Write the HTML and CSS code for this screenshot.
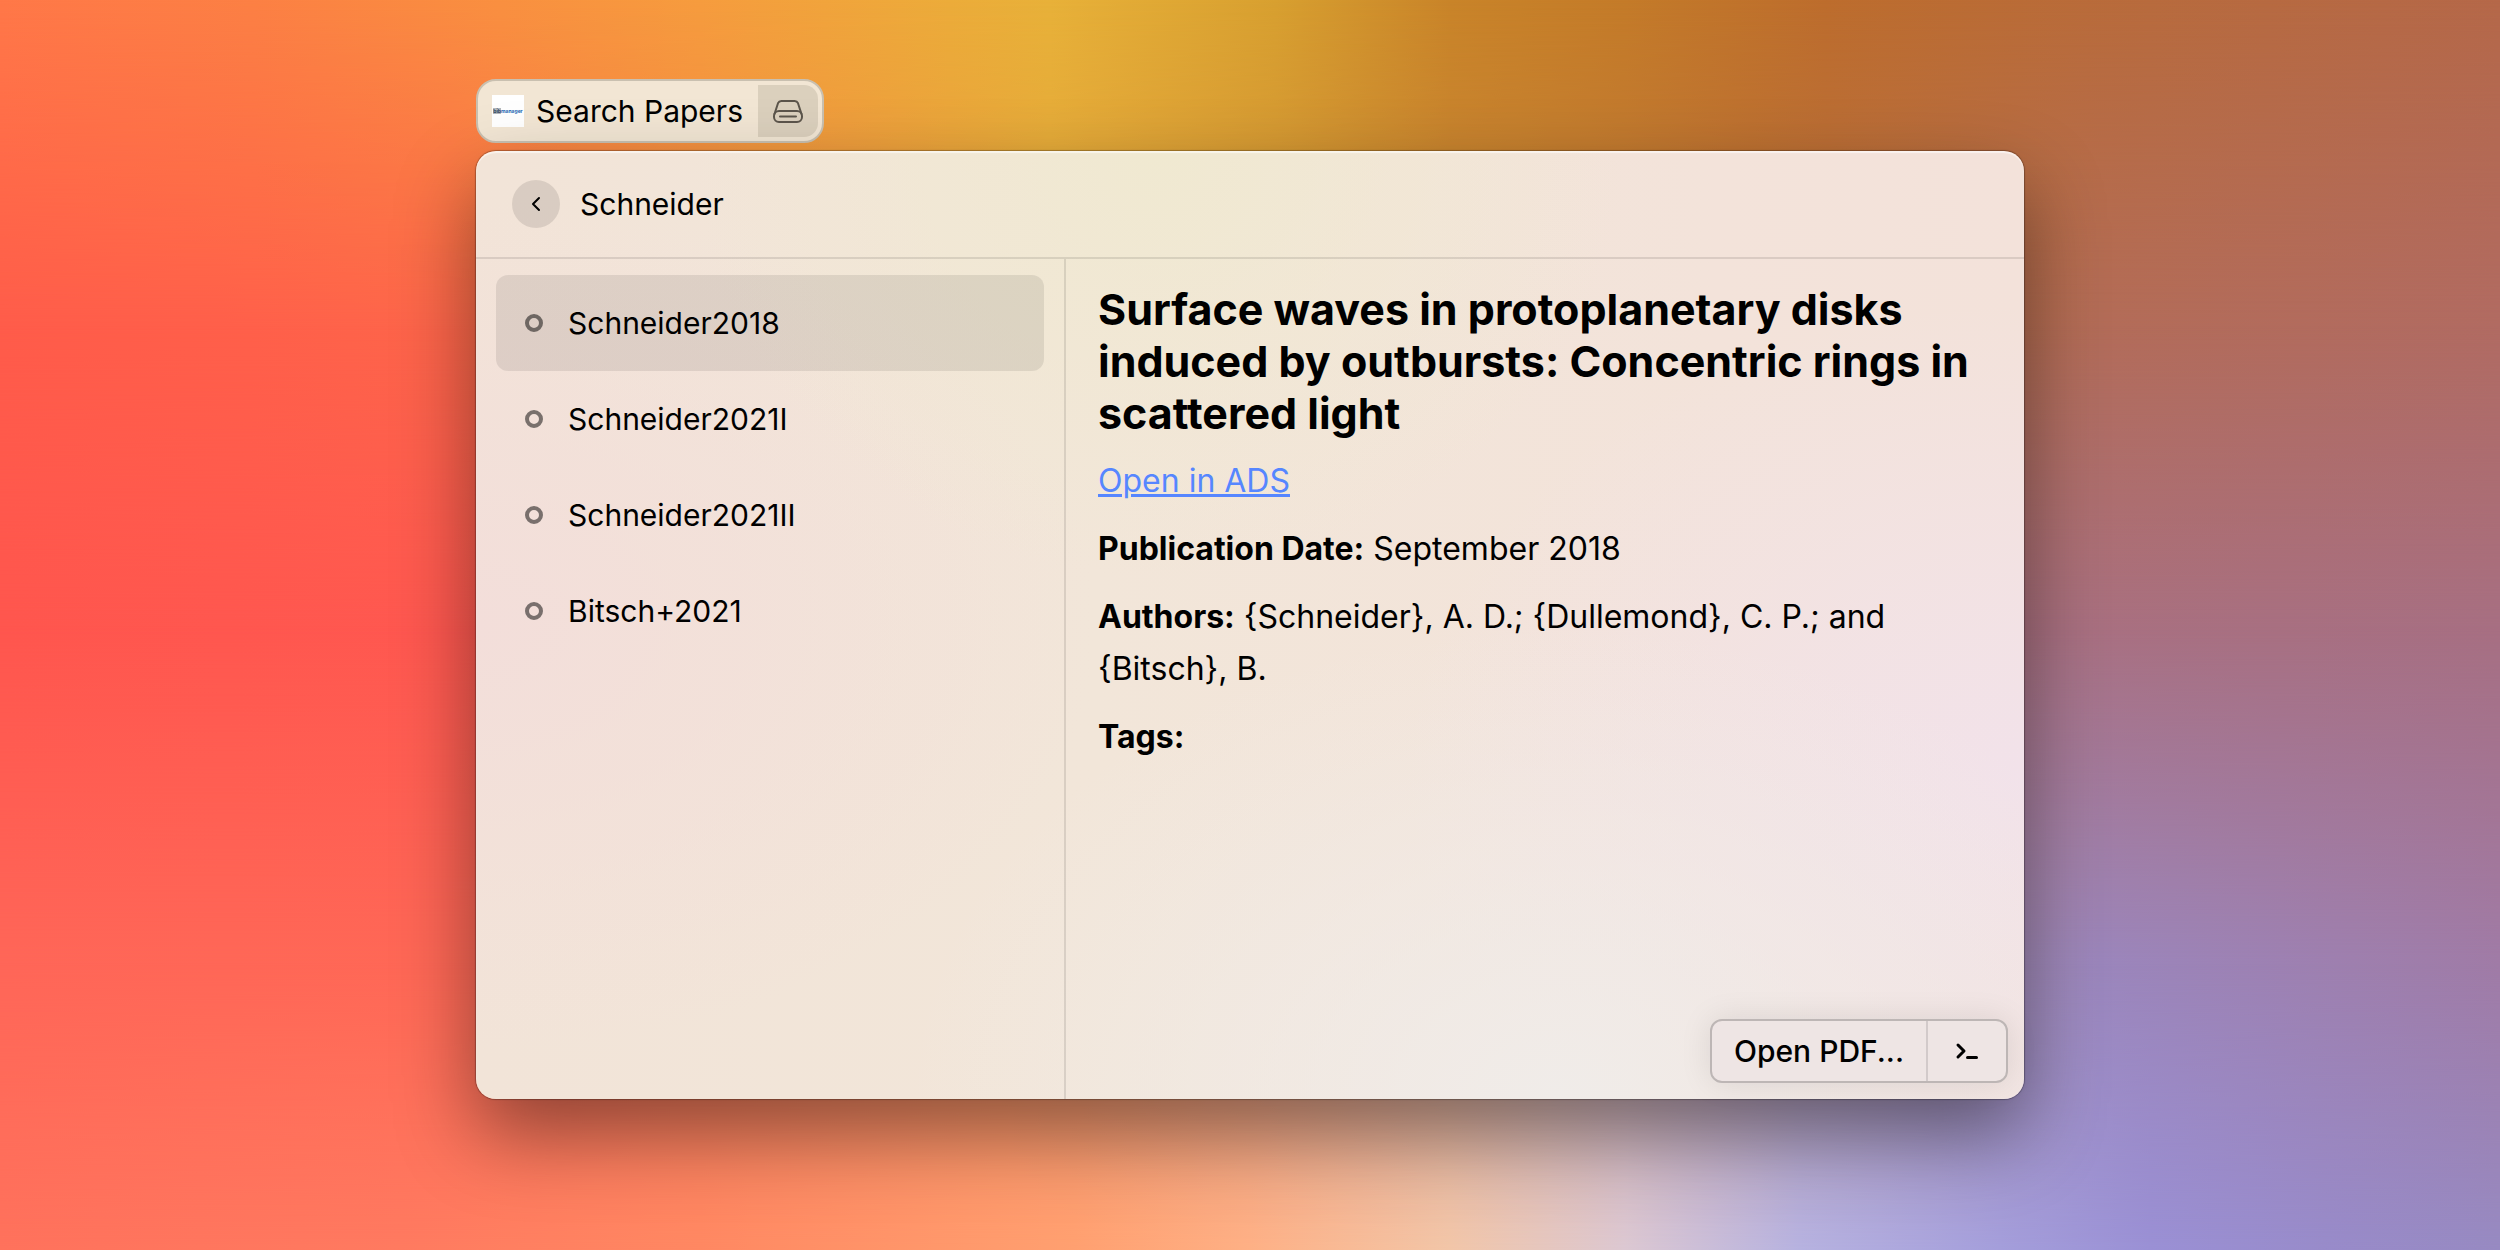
FILE: index.html
```html
<!DOCTYPE html>
<html lang="en">
<head>
<meta charset="utf-8">
<meta name="viewport" content="width=device-width, initial-scale=1">
<title>Search Papers</title>
<link rel="stylesheet" href="styles.css">
</head>
<body>
<div class="wallpaper" aria-hidden="true">
  <div class="band band-1"></div>
  <div class="band band-2"></div>
  <div class="band band-3"></div>
  <div class="band band-4"></div>
  <div class="band band-5"></div>
</div>
<main class="stage">
  <div class="badge">
    <span class="logo"><span class="logo-mark">bib</span>manager</span>
    <span class="badge-name">Search Papers</span>
    <span class="badge-source">
      <svg width="32" height="24" viewBox="0 0 32 24" fill="none" stroke="currentColor" stroke-width="2" stroke-linecap="round" stroke-linejoin="round">
        <rect x="2" y="12" width="28" height="11" rx="5"/>
        <path d="M2.500 15 6 4.200Q7 2 9.300 2h13.400Q25 2 26 4.200L29.500 15M8 17.500h16"/>
      </svg>
    </span>
  </div>

  <section class="window">
    <header class="search-bar">
      <button class="back" type="button" aria-label="Back">
        <svg width="12" height="16" viewBox="0 0 12 16" fill="none" stroke="currentColor" stroke-width="2" stroke-linecap="round" stroke-linejoin="round"><path d="M9 2 3 8l6 6"/></svg>
      </button>
      <input class="query" type="text" value="Schneider" aria-label="Search papers">
    </header>

    <div class="columns">
      <nav class="results" aria-label="Papers">
        <button class="result selected" type="button"><span class="ring"></span>Schneider2018</button>
        <button class="result" type="button"><span class="ring"></span>Schneider2021I</button>
        <button class="result" type="button"><span class="ring"></span>Schneider2021II</button>
        <button class="result" type="button"><span class="ring"></span>Bitsch+2021</button>
      </nav>

      <article class="detail">
        <h1>Surface waves in protoplanetary disks induced by outbursts: Concentric rings in scattered light</h1>
        <p><a href="#ads">Open in ADS</a></p>
        <p><strong>Publication Date:</strong> September 2018</p>
        <p><strong>Authors:</strong> {Schneider}, A. D.; {Dullemond}, C. P.; and {Bitsch}, B.</p>
        <p><strong>Tags:</strong></p>
        <div class="actions">
          <button class="action-main" type="button">Open PDF...</button>
          <button class="action-more" type="button" aria-label="More actions">
            <svg width="24" height="20" viewBox="0 0 24 20" fill="none" stroke="currentColor" stroke-width="3" stroke-linecap="round" stroke-linejoin="round"><path d="m3 4 6 6-6 6M12.500 16.500h9"/></svg>
          </button>
        </div>
      </article>
    </div>
  </section>
</main>
</body>
</html>
```

FILE: styles.css
```css
* {
  box-sizing: border-box;
}

body {
  margin: 0;
  color: #000;
  font-family: Inter, "Liberation Sans", sans-serif;
  font-size: 30px;
  line-height: 40px;
}

button,
input {
  margin: 0;
  padding: 0;
  border: 0;
  background: none;
  color: inherit;
  font: inherit;
}

svg {
  display: block;
}

/* Wallpaper: horizontal colour bands, each fading in over the one above it */
.wallpaper,
.band {
  position: absolute;
  inset: 0;
}

.wallpaper {
  z-index: -1;
  overflow: hidden;
}

.band-1 {
  background: linear-gradient(90deg, #ff7848, #fc8044 10%, #f99040 20%, #f69c3e 28%, #ecac3a 38%, #e8b139 42%, #d8a030 51%, #c98429 58%, #c47b29 65%, #bd6d2d 73%, #b86b3d 86%, #b56849);
}

.band-2 {
  background: linear-gradient(90deg, #ff5c4a, #ff604a 10%, #fd664a 18%, #f08a40 30%, #e4a53a 42%, #cc8a34 55%, #bb7038 70%, #b36c58 84%, #b16b62);
  mask-image: linear-gradient(transparent, #000 26%);
}

.band-3 {
  background: linear-gradient(90deg, #ff564e, #ff5850 18%, #f08054 40%, #c07864 60%, #a97080 82%, #a76f82);
  mask-image: linear-gradient(transparent 26%, #000 50%);
}

.band-4 {
  background: linear-gradient(90deg, #ff6658, #ff6856 18%, #ff9468 40%, #d0a8a8 62%, #9b86bc 84%, #a07ba6);
  mask-image: linear-gradient(transparent 50%, #000 77%);
}

.band-5 {
  background: linear-gradient(90deg, #ff725c, #ff7a60 16%, #ff8862 28%, #ffa070 43%, #feb085 50%, #f2c6a8 58%, #dcc8d2 65%, #b6b2e0 72%, #a49edb 80%, #9a90d5 86%, #988bca 93%, #978ac2);
  mask-image: linear-gradient(transparent 77%, #000);
}

.stage {
  max-width: 1548px;
  min-height: 100vh;
  margin: 0 auto;
  padding: 79px 0 72px;
  display: flex;
  flex-direction: column;
  align-items: flex-start;
  gap: 8px;
}

/* Command badge */
.badge {
  height: 64px;
  padding: 4px 4px 4px 14px;
  display: flex;
  align-items: center;
  gap: 12px;
  border: 2px solid #c9c0b0;
  border-radius: 20px;
  background: #f2e6d4;
}

.logo {
  width: 32px;
  height: 32px;
  display: flex;
  align-items: center;
  justify-content: center;
  background: #fff;
  color: #2466b4;
  font-size: 5px;
  font-weight: 700;
  line-height: 6px;
}

.logo-mark {
  background: #b4b8bc;
  color: #2c4460;
}

.badge-name {
  padding-right: 3px;
}

.badge-source {
  width: 60px;
  height: 52px;
  display: grid;
  place-items: center;
  border-radius: 0 14px 14px 0;
  background: #dbd0bd;
  color: #5c554b;
}

/* Window */
.window {
  width: 100%;
  min-height: 948px;
  display: flex;
  flex-direction: column;
  border-radius: 20px;
  background:
    radial-gradient(ellipse 30% 45% at 44% 0, #f0e9d1, #f0e9d100),
    radial-gradient(ellipse 42% 50% at 70% 100%, #f0ece9, #f0ece900),
    radial-gradient(ellipse 40% 50% at 100% 66%, #f2e2ea, #f2e2ea00),
    radial-gradient(ellipse 40% 45% at 0 50%, #f3deda, #f3deda00),
    linear-gradient(90deg, #f2e4d8, #f2e6d9 40%, #f3e3da 80%, #f3e2da);
  box-shadow:
    inset 0 2px 1px #ffffff90,
    0 0 1px 1px #00000048,
    0 36px 80px #00000070;
}

.search-bar {
  height: 108px;
  padding: 0 36px;
  display: flex;
  align-items: center;
  gap: 20px;
  border-bottom: 2px solid #0000001a;
}

.back {
  width: 48px;
  height: 48px;
  display: grid;
  place-items: center;
  border-radius: 50%;
  background: #0000001a;
}

.query {
  flex: 1;
  min-width: 0;
  height: 48px;
  outline: 0;
}

.columns {
  flex: 1;
  display: grid;
  grid-template-columns: 590px 1fr;
}

.results {
  padding: 16px 20px;
  border-right: 2px solid #0000001a;
}

.result {
  width: 100%;
  height: 96px;
  padding: 0 29px;
  display: flex;
  align-items: center;
  gap: 25px;
  border-radius: 12px;
  text-align: left;
}

.selected {
  background: #00000016;
}

.ring {
  width: 18px;
  height: 18px;
  border: 4px solid #00000080;
  border-radius: 50%;
}

/* Paper detail */
.detail {
  padding: 24px 16px 16px 32px;
  display: flex;
  flex-direction: column;
  gap: 16px;
  font-size: 32px;
  line-height: 52px;
}

.detail h1,
.detail p {
  margin: 0 16px 0 0;
}

.detail h1 {
  font-size: 43px;
  font-weight: 700;
}

.detail a {
  color: #5686ff;
}

.actions {
  height: 64px;
  margin-top: auto;
  align-self: flex-end;
  display: flex;
  border: 2px solid #bdb6b5;
  border-radius: 12px;
  background: #eee5e4;
  box-shadow: 0 0 32px #00000018;
  font-size: 30px;
  font-weight: 500;
}

.action-main {
  padding: 0 22px;
}

.action-more {
  width: 80px;
  display: grid;
  place-items: center;
  border-left: 2px solid #d2caca;
}
```
